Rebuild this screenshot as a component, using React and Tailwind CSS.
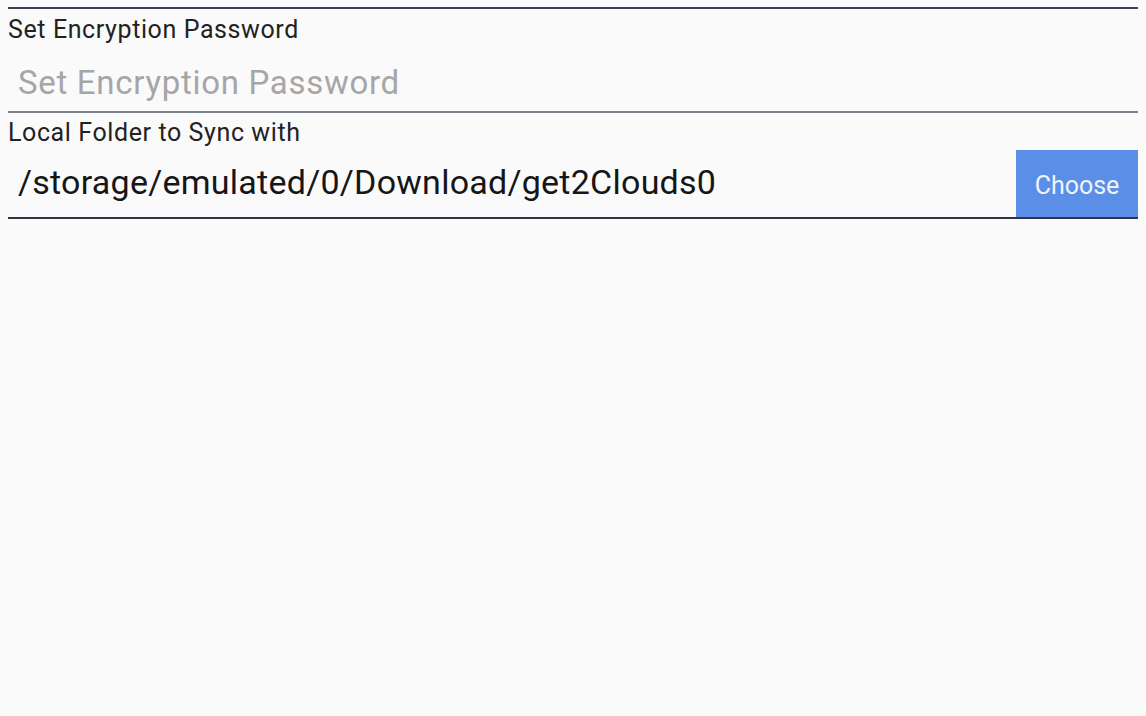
export default function App() {
  return (
    <div className="min-h-[716px] w-full bg-[#fafafa] px-2 pt-[7px] font-['Roboto',sans-serif]">
      <div className="h-[2px] bg-[#3b4250]" />
      <div className="mt-[6px] text-[25px] leading-[30px] tracking-[0.6px] text-[#222]">
        Set Encryption Password
      </div>
      <div className="h-[68px] border-b-2 border-[#7b808a] pl-[10px] pt-[18px]">
        <input
          className="h-[40px] w-full bg-transparent text-[33px] leading-[40px] tracking-[0.7px] text-[#333] outline-none placeholder:text-[#a6a6a6]"
          placeholder="Set Encryption Password"
        />
      </div>
      <div className="mt-[5px] text-[25px] leading-[30px] tracking-[0.6px] text-[#222]">
        Local Folder to Sync with
      </div>
      <div className="mt-[2px] flex h-[69px] items-stretch border-b-2 border-[#2f3542]">
        <div className="flex flex-1 items-center pb-1 pl-[10px] text-[34px] leading-[40px] tracking-[0.25px] text-[#161616]">
          /storage/emulated/0/Download/get2Clouds0
        </div>
        <button className="w-[122px] bg-[#5b8ee6] pt-1 text-[25px] leading-[30px] text-[#eef3ff]">
          Choose
        </button>
      </div>
    </div>
  );
}
